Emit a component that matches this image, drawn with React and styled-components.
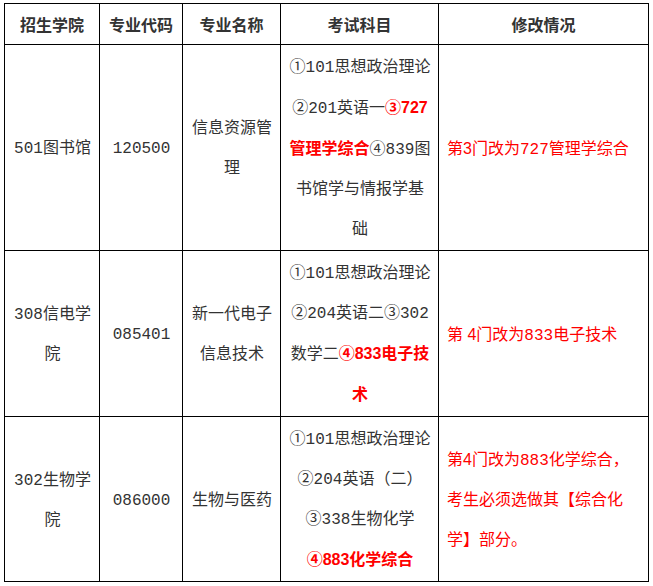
import styled, { createGlobalStyle } from "styled-components";

const GlobalStyle = createGlobalStyle`
  html, body {
    margin: 0;
    padding: 0;
    background: #fff;
  }
`;

const Page = styled.div`
  padding: 3px 0 0 4px;
`;

const Table = styled.table`
  width: 644px;
  border-collapse: collapse;
  table-layout: fixed;
  font-family: "Liberation Mono", "Noto Sans CJK SC", monospace;
  font-size: 16px;
  color: #333;
`;

const HeadRow = styled.tr`
  height: 41px;
`;

const Row = styled.tr`
  height: ${({ $h }) => $h}px;
`;

const Th = styled.th`
  border: 1px solid #000;
  padding: 0;
  font-family: "Noto Sans CJK SC", sans-serif;
  font-weight: 700;
  line-height: 20px;
  text-align: center;
  vertical-align: middle;
`;

const Td = styled.td`
  border: 1px solid #000;
  padding: 3px 7px 0 8px;
  line-height: 40px;
  text-align: ${({ $left }) => ($left ? "left" : "center")};
  vertical-align: middle;
  color: ${({ $red }) => ($red ? "#f00" : "#333")};
`;

const Line = styled.span`
  display: block;
  white-space: nowrap;
`;

const Hl = styled.b`
  color: #f00;
  font-family: "Liberation Sans", "Noto Sans CJK SC", sans-serif;
  font-weight: 700;
`;

const Sans = styled.span`
  font-family: "Liberation Sans", "Noto Sans CJK SC", sans-serif;
`;

const widths = [95, 83, 98, 158, 210];

export default function App() {
  return (
    <Page>
      <GlobalStyle />
      <Table>
        <colgroup>
          {widths.map((w, i) => (
            <col key={i} style={{ width: w }} />
          ))}
        </colgroup>
        <thead>
          <HeadRow>
            <Th>招生学院</Th>
            <Th>专业代码</Th>
            <Th>专业名称</Th>
            <Th>考试科目</Th>
            <Th>修改情况</Th>
          </HeadRow>
        </thead>
        <tbody>
          <Row $h={205}>
            <Td>501图书馆</Td>
            <Td>120500</Td>
            <Td>信息资源管理</Td>
            <Td>
              <Line>①101思想政治理论</Line>
              <Line>
                ②201英语一<Hl>③727</Hl>
              </Line>
              <Line>
                <Hl>管理学综合</Hl>④839图
              </Line>
              <Line>书馆学与情报学基</Line>
              <Line>础</Line>
            </Td>
            <Td $left $red>
              <Line>
                第<Sans>3</Sans>门改为727管理学综合
              </Line>
            </Td>
          </Row>
          <Row $h={164}>
            <Td>308信电学院</Td>
            <Td>085401</Td>
            <Td>新一代电子信息技术</Td>
            <Td>
              <Line>①101思想政治理论</Line>
              <Line>②204英语二③302</Line>
              <Line>
                数学二<Hl>④833电子技</Hl>
              </Line>
              <Line>
                <Hl>术</Hl>
              </Line>
            </Td>
            <Td $left $red>
              <Line>
                第<Sans> 4</Sans>门改为833电子技术
              </Line>
            </Td>
          </Row>
          <Row $h={164}>
            <Td>302生物学院</Td>
            <Td>086000</Td>
            <Td>生物与医药</Td>
            <Td>
              <Line>①101思想政治理论</Line>
              <Line>②204英语（二）</Line>
              <Line>③338生物化学</Line>
              <Line>
                <Hl>④883化学综合</Hl>
              </Line>
            </Td>
            <Td $left $red>
              <Line>
                第<Sans>4</Sans>门改为883化学综合，
              </Line>
              <Line>考生必须选做其【综合化</Line>
              <Line>学】部分。</Line>
            </Td>
          </Row>
        </tbody>
      </Table>
    </Page>
  );
}
